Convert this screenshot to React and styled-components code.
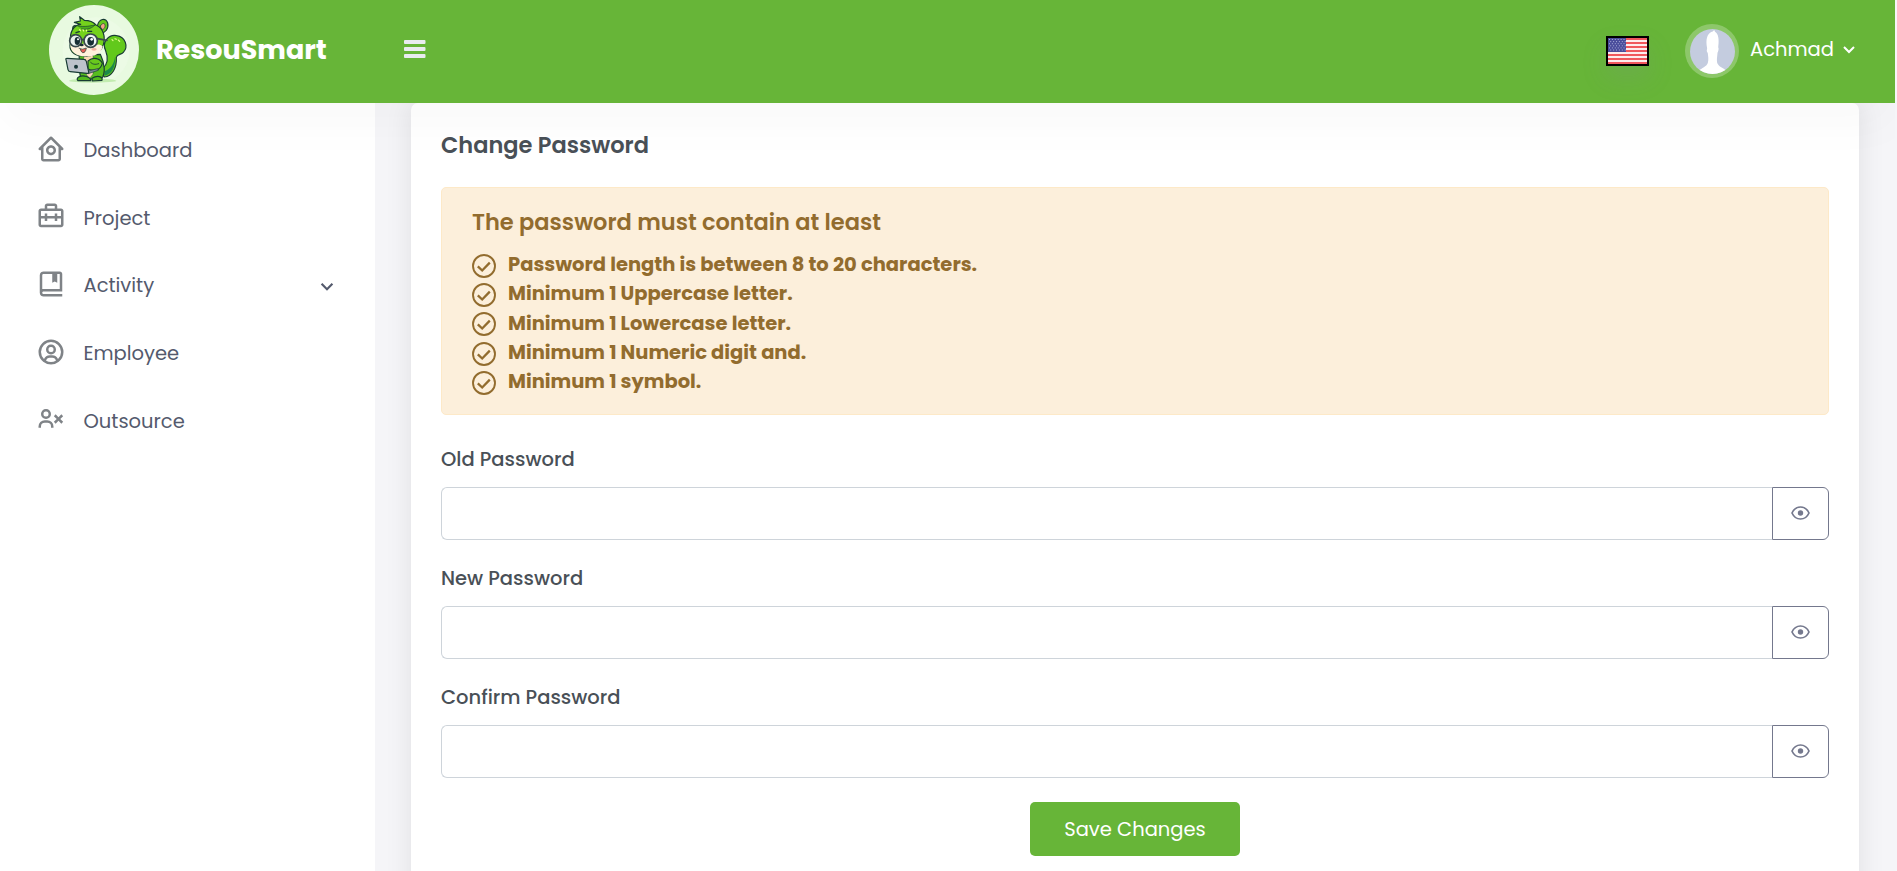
import React from 'react';
import styled, { createGlobalStyle } from 'styled-components';
import {
  BiHomeCircle,
  BiBriefcaseAlt2,
  BiBookBookmark,
  BiUserCircle,
  BiUserX,
  BiChevronDown,
} from 'react-icons/bi';

const GlobalStyle = createGlobalStyle`
  * { box-sizing: border-box; }
  body {
    margin: 0;
    background: #f5f5f8;
    font-family: Poppins, Inter, 'Liberation Sans', sans-serif;
    font-size: 19.5px;
    color: #495057;
    overflow: hidden;
  }
`;

const Page = styled.div`
  height: 871px;
  width: 1895px;
  display: flex;
  flex-direction: column;
  overflow: hidden;
`;

const Header = styled.header`
  position: relative;
  z-index: 2;
  flex: none;
  height: 103px;
  padding: 0 39px 0 49px;
  display: flex;
  align-items: flex-start;
  background: #67b538;
  box-shadow: 0 24px 48px rgba(0, 0, 0, 0.022);
`;

const Brand = styled.div`
  width: 355px;
  height: 100px;
  display: flex;
  align-items: center;
  gap: 17px;
`;

const BrandName = styled.span`
  font-size: 27px;
  line-height: 34px;
  font-weight: 700;
  color: #fff;
`;

const MenuButton = styled.button`
  height: 97px;
  padding: 0;
  border: 0;
  background: none;
  display: flex;
  align-items: center;
  color: #e9ecef;
`;

const HeaderRight = styled.div`
  height: 102px;
  margin-left: auto;
  display: flex;
  align-items: center;
`;

const Flag = styled.svg`
  display: block;
  width: 43px;
  height: 30px;
  border: 2px solid #000;
  margin-right: 36px;
  box-shadow: 0 12px 24px rgba(130, 140, 160, 0.18);
`;

const Avatar = styled.div`
  width: 54px;
  height: 54px;
  padding: 4.5px;
  border-radius: 50%;
  background: rgba(255, 255, 255, 0.25);
  svg { display: block; width: 45px; height: 45px; border-radius: 50%; }
`;

const UserName = styled.span`
  margin-left: 11px;
  padding-bottom: 3px;
  line-height: 26px;
  color: #fff;
`;

const UserChevron = styled(BiChevronDown)`
  width: 24px;
  height: 24px;
  margin: 0 -5px 5px 3px;
  color: #fff;
`;

const Body = styled.div`
  flex: 1;
  min-height: 0;
  display: flex;
`;

const Sidebar = styled.nav`
  flex: none;
  width: 375px;
  padding: 14.5px 35px 0 36px;
  background: #fff;
`;

const NavItem = styled.a`
  height: 67.6px;
  display: flex;
  align-items: center;
  color: #545a6d;
  line-height: 26px;
`;

const NavIcon = styled.span`
  width: 30px;
  margin: 0 17.5px 5px 0;
  font-size: 30px;
  line-height: 0;
  color: #7f8387;
`;

const NavChevron = styled(BiChevronDown)`
  width: 26px;
  height: 26px;
  margin-left: auto;
`;

const Main = styled.main`
  flex: 1;
  padding: 0 36px;
`;

const Card = styled.section`
  height: 800px;
  padding: 29px 30px;
  border-radius: 7px;
  background: #fff;
  box-shadow: 0 0 28px rgba(0, 0, 0, 0.09);
`;

const CardTitle = styled.h4`
  margin: 0 0 29px;
  font-size: 22.5px;
  line-height: 26px;
  font-weight: 600;
`;

const Alert = styled.div`
  height: 228px;
  padding: 21px 30px;
  border: 1px solid #fde9c8;
  border-radius: 5px;
  background: #fcefdb;
  color: #926c2e;
`;

const AlertTitle = styled.h5`
  margin: 0 0 15px;
  font-size: 22.5px;
  line-height: 26px;
  font-weight: 600;
`;

const RuleList = styled.ul`
  margin: 0;
  padding: 0;
  list-style: none;
`;

const Rule = styled.li`
  height: 29.3px;
  display: flex;
  align-items: center;
  gap: 12px;
  font-weight: 700;
  line-height: 29px;
  svg { flex: none; margin-top: 2px; }
`;

const Field = styled.div`
  margin-top: ${(p) => (p.$first ? 30 : 24)}px;
`;

const Label = styled.label`
  display: block;
  margin-bottom: 12px;
  line-height: 30px;
  font-weight: 500;
`;

const InputGroup = styled.div`
  display: flex;
  height: 53px;
`;

const Input = styled.input`
  flex: 1;
  min-width: 0;
  padding: 0 16px;
  border: 1px solid #ced4da;
  border-right: 0;
  border-radius: 6px 0 0 6px;
  background: #fff;
  font: inherit;
  outline: none;
`;

const Toggle = styled.button`
  width: 57px;
  padding: 0 0 2px;
  display: flex;
  align-items: center;
  justify-content: center;
  border: 1px solid #74788d;
  border-radius: 0 6px 6px 0;
  background: #fff;
  color: #74788d;
`;

const Actions = styled.div`
  margin-top: 24px;
  display: flex;
  justify-content: center;
`;

const SaveButton = styled.button`
  width: 210px;
  height: 54px;
  padding: 0;
  border: 0;
  border-radius: 5px;
  background: #67b538;
  color: #fff;
  font: inherit;
`;

const Logo = () => (
  <svg width="90" height="90" viewBox="27 15 270 270">
    <circle cx="162" cy="150" r="135" fill="#e8fae0" />
    <circle cx="168" cy="152" r="100" fill="#ecfbe5" />
    <ellipse cx="158" cy="242" rx="71" ry="6" fill="#c2ecb0" />
    <g stroke="#173b33" strokeWidth="3.5" strokeLinejoin="round" strokeLinecap="round">
      <path d="M188 205C206 190 204 170 197 152C184 125 208 102 230 107C256 110 266 140 250 157C243 165 231 162 229 172C231 205 216 229 193 231C186 225 184 215 188 205Z" fill="#62c91b" />
      <path d="M194 214C213 207 222 190 225 172C228 202 213 225 193 227Z" fill="#1c8a4a" stroke="none" />
      <path d="M99 95C95 76 104 72 115 84L110 103Z" fill="#58bd18" />
      <path d="M172 78C177 54 197 53 203 69C207 87 195 99 183 99Z" fill="#64c81a" />
      <path d="M181 78C188 65 199 70 194 83C190 90 184 91 181 78Z" fill="#f5a285" strokeWidth="2" />
      <path d="M117 164C120 190 116 216 123 237H184C198 220 194 190 181 163Z" fill="#57bd1e" />
      <path d="M133 164C127 195 134 219 148 236L159 222V166Z" fill="#fbd9b4" strokeWidth="1" />
      <path d="M92 124C88 96 101 75 122 73L103 67L121 63L119 50L133 61C154 61 162 68 168 75C190 85 197 109 190 134C182 159 158 171 132 168C100 169 84 151 92 124Z" fill="#74d21c" />
      <path d="M91 131C89 155 110 170 139 169C172 171 186 154 188 139C175 127 165 138 145 137C132 124 111 139 91 131Z" fill="#fff1dc" stroke="none" />
      <path d="M108 76C126 82 145 79 165 75C151 89 135 89 125 87" fill="#4bae19" strokeWidth="2" />
      <path d="M108 98L118 95M143 94L155 94" fill="none" strokeWidth="4" />
      <circle cx="107" cy="122" r="18" fill="#e9f2ee" stroke="#394a4c" strokeWidth="5" />
      <circle cx="152" cy="122" r="20" fill="#eff6f4" stroke="#394a4c" strokeWidth="5" />
      <path d="M172 116L201 121M124 119L132 119" fill="none" stroke="#394a4c" strokeWidth="5" />
      <ellipse cx="112" cy="123" rx="8" ry="12" fill="#172e34" stroke="none" />
      <ellipse cx="152" cy="124" rx="10" ry="13" fill="#172e34" stroke="none" />
      <circle cx="114" cy="118" r="3" fill="#fff" stroke="none" />
      <circle cx="155" cy="118" r="4" fill="#fff" stroke="none" />
      <ellipse cx="125" cy="135" rx="6" ry="4" fill="#172e34" stroke="none" />
      <path d="M117 145Q127 151 139 144Q137 159 128 158Q122 155 121 148" fill="#e65d55" strokeWidth="2" />
      <ellipse cx="162" cy="148" rx="8" ry="4" fill="#f4b3a4" stroke="none" />
      <path d="M144 183C160 169 181 176 187 190C180 214 159 214 144 207Z" fill="#69c91d" />
      <path d="M151 186C156 193 165 195 176 191" fill="none" strokeWidth="2.5" />
      <path d="M116 231C129 224 153 230 152 242H114C110 239 111 234 116 231ZM156 235C171 225 190 229 186 241L157 243Z" fill="#52b91d" />
      <path d="M144 213L173 206L175 211L145 221Z" fill="#7b8796" strokeWidth="2" />
      <path d="M78 179Q76 175 81 175L132 178Q137 178 139 184L146 216Q147 221 141 220L91 215Q85 215 84 209Z" fill="#bdc3cb" />
      <circle cx="108" cy="200" r="6" fill="#173536" stroke="none" />
    </g>
    <path d="M119 89L121 92M129 89L131 93M139 90L140 93M216 119L219 122M225 116L229 118M235 120L239 124" stroke="#e6ff8f" strokeWidth="3.5" strokeLinecap="round" />
  </svg>
);

const BarsIcon = () => (
  <svg width="21.5" height="18" viewBox="0 0 21.5 18" fill="currentColor">
    <rect width="21.5" height="4" rx="0.9" />
    <rect y="7" width="21.5" height="4" rx="0.9" />
    <rect y="14" width="21.5" height="4" rx="0.9" />
  </svg>
);

const UsFlag = () => (
  <Flag viewBox="0 0 39 26" preserveAspectRatio="none">
    <rect width="39" height="26" fill="#fdebed" />
    {[0, 2, 4, 6, 8, 10, 12].map((i) => (
      <rect key={i} y={i * 2} width="39" height="2" fill="#f0575d" />
    ))}
    <rect width="18" height="14" fill="#4a4c9b" />
    {[0, 1, 2, 3, 4, 5].map((r) =>
      [0, 1, 2, 3, 4, 5].map((c) => (
        <rect
          key={`${r}-${c}`}
          x={1 + c * 2.9 + (r % 2) * 1.2}
          y={1 + r * 2.1}
          width="1"
          height="1"
          fill="#a9acd8"
        />
      ))
    )}
  </Flag>
);

const Portrait = () => (
  <svg viewBox="330 86 134 134">
    <rect x="330" y="86" width="134" height="134" fill="#c4ccdf" />
    <path
      d="M381 143C376 118 381 101 393 95Q398 95 402 89Q404 95 408 97C417 106 416 126 414 140Q417 145 412 157C411 170 409 178 411 187C416 199 429 201 438 210V220H356V210C365 202 379 198 383 187C386 177 384 168 383 158Q378 149 381 143Z"
      fill="#fff"
    />
  </svg>
);

const CheckIcon = () => (
  <svg width="24" height="24" viewBox="0 0 24 24" fill="none" stroke="currentColor">
    <circle cx="12" cy="12" r="11" strokeWidth="1.9" />
    <path d="M5.8 12.3L10.2 16.5L17.8 8.6" strokeWidth="2.3" />
  </svg>
);

const EyeIcon = () => (
  <svg width="19" height="14" viewBox="0 0 19 14" fill="none" stroke="currentColor">
    <path d="M1 7Q3.7 1 9.5 1T18 7Q15.3 13 9.5 13T1 7Z" strokeWidth="1.7" />
    <circle cx="9.5" cy="7" r="2.7" fill="currentColor" stroke="none" />
  </svg>
);

const navItems = [
  { text: 'Dashboard', Icon: BiHomeCircle },
  { text: 'Project', Icon: BiBriefcaseAlt2 },
  { text: 'Activity', Icon: BiBookBookmark, expandable: true },
  { text: 'Employee', Icon: BiUserCircle },
  { text: 'Outsource', Icon: BiUserX },
];

const rules = [
  'Password length is between 8 to 20 characters.',
  'Minimum 1 Uppercase letter.',
  'Minimum 1 Lowercase letter.',
  'Minimum 1 Numeric digit and.',
  'Minimum 1 symbol.',
];

const fields = ['Old Password', 'New Password', 'Confirm Password'];

export default function App() {
  return (
    <>
      <GlobalStyle />
      <Page>
        <Header>
          <Brand>
            <Logo />
            <BrandName>ResouSmart</BrandName>
          </Brand>
          <MenuButton aria-label="Toggle menu">
            <BarsIcon />
          </MenuButton>
          <HeaderRight>
            <UsFlag />
            <Avatar>
              <Portrait />
            </Avatar>
            <UserName>Achmad</UserName>
            <UserChevron />
          </HeaderRight>
        </Header>
        <Body>
          <Sidebar>
            {navItems.map(({ text, Icon, expandable }) => (
              <NavItem key={text}>
                <NavIcon>
                  <Icon />
                </NavIcon>
                {text}
                {expandable && <NavChevron />}
              </NavItem>
            ))}
          </Sidebar>
          <Main>
            <Card>
              <CardTitle>Change Password</CardTitle>
              <Alert>
                <AlertTitle>The password must contain at least</AlertTitle>
                <RuleList>
                  {rules.map((text) => (
                    <Rule key={text}>
                      <CheckIcon />
                      {text}
                    </Rule>
                  ))}
                </RuleList>
              </Alert>
              {fields.map((text, i) => (
                <Field key={text} $first={i === 0}>
                  <Label>{text}</Label>
                  <InputGroup>
                    <Input type="password" aria-label={text} />
                    <Toggle aria-label="Show password">
                      <EyeIcon />
                    </Toggle>
                  </InputGroup>
                </Field>
              ))}
              <Actions>
                <SaveButton>Save Changes</SaveButton>
              </Actions>
            </Card>
          </Main>
        </Body>
      </Page>
    </>
  );
}
